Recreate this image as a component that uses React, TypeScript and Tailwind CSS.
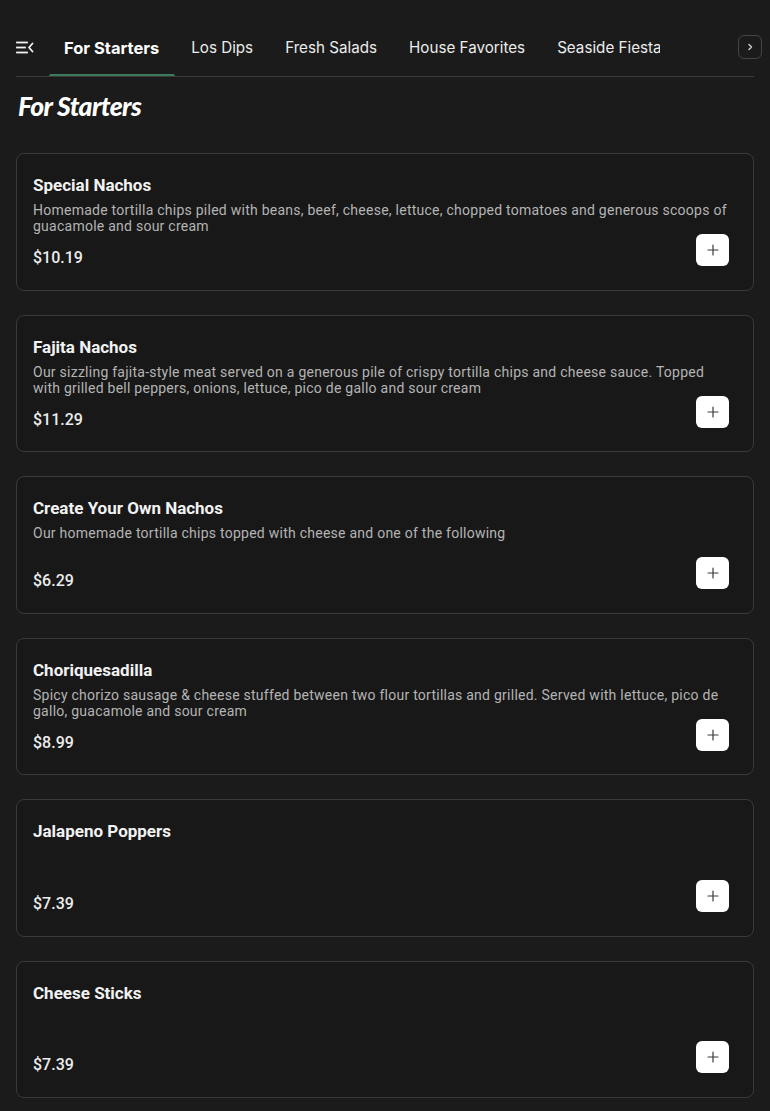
import React from "react";

const items = [
  {
    name: "Special Nachos",
    desc: "Homemade tortilla chips piled with beans, beef, cheese, lettuce, chopped tomatoes and generous scoops of guacamole and sour cream",
    price: "$10.19",
  },
  {
    name: "Fajita Nachos",
    desc: "Our sizzling fajita-style meat served on a generous pile of crispy tortilla chips and cheese sauce. Topped with grilled bell peppers, onions, lettuce, pico de gallo and sour cream",
    price: "$11.29",
  },
  {
    name: "Create Your Own Nachos",
    desc: "Our homemade tortilla chips topped with cheese and one of the following",
    price: "$6.29",
  },
  {
    name: "Choriquesadilla",
    desc: "Spicy chorizo sausage & cheese stuffed between two flour tortillas and grilled. Served with lettuce, pico de gallo, guacamole and sour cream",
    price: "$8.99",
  },
  { name: "Jalapeno Poppers", desc: "", price: "$7.39" },
  { name: "Cheese Sticks", desc: "", price: "$7.39" },
];

const tabs = ["For Starters", "Los Dips", "Fresh Salads", "House Favorites", "Seaside Fiesta"];

function MenuIcon() {
  return (
    <svg width="18" height="13" viewBox="0 0 18 13" fill="none" stroke="#f2f2f2" strokeWidth="1.8" strokeLinecap="square">
      <line x1="1" y1="1.5" x2="11" y2="1.5" />
      <line x1="1" y1="6.5" x2="9" y2="6.5" />
      <line x1="1" y1="11.5" x2="11" y2="11.5" />
      <polyline points="16.5,2.5 13,6.5 16.5,10.5" strokeLinecap="round" strokeLinejoin="round" />
    </svg>
  );
}

export default function App() {
  return (
    <div className="min-h-[1111px] bg-[#1b1b1b] px-4" style={{ fontFamily: "Roboto, sans-serif" }}>
      <div className="relative flex items-end border-b border-[#3c3c3c] h-[77px]">
        <div className="absolute left-0 top-[41px]">
          <MenuIcon />
        </div>
        <div className="ml-[32px] w-[612px] overflow-hidden flex" style={{ fontFamily: "Inter, sans-serif" }}>
          {tabs.map((t, i) => (
            <div key={t} className="relative shrink-0 px-4 pt-0 pb-[16px]">
              <span
                className={
                  i === 0
                    ? "block text-[16.5px] leading-[24px] font-bold text-white whitespace-nowrap -mt-[3px]"
                    : "block text-[15.2px] leading-[24px] text-[#ececec] whitespace-nowrap -mt-[3px]"
                }
              >
                {t}
              </span>
              {i === 0 && (
                <div className="absolute left-[1px] right-0 -bottom-[2px] h-[4px] rounded-full bg-[#3b7a5a]" />
              )}
            </div>
          ))}
        </div>
        <div className="absolute -right-[8px] top-[35px] w-[24px] h-[24px] rounded-md border border-[#454545] flex items-center justify-center">
          <svg width="10" height="10" viewBox="0 0 10 10" fill="none" stroke="#d0d0d0" strokeWidth="1.4" strokeLinecap="round" strokeLinejoin="round">
            <polyline points="4,2.5 6.5,5 4,7.5" />
          </svg>
        </div>
      </div>

      <h1
        className="mt-[9px] ml-[2px] text-[26.5px] leading-[40px] text-white italic font-black tracking-[-0.6px]"
        style={{ fontFamily: "Lato, sans-serif" }}
      >
        For Starters
      </h1>

      <div className="mt-[27px] flex flex-col gap-[24px]">
        {items.map((it) => (
          <div
            key={it.name}
            className="h-[137.5px] rounded-lg border border-[#3a3a3a] bg-[#181818] pl-4 pr-6 pt-[20px] pb-6 flex flex-col"
          >
            <div className="text-[17px] leading-[22px] font-bold text-[#f2f2f2]">{it.name}</div>
            {it.desc && (
              <div className="mt-[6px] text-[14px] leading-[16px] text-[#b4b4b4] tracking-[0.25px]">{it.desc}</div>
            )}
            <div className="mt-auto flex items-end justify-between">
              <div className="text-[16px] leading-[18px] font-medium text-[#ececec] -mb-[1px]">{it.price}</div>
              <button className="w-[33px] h-[32px] rounded-md bg-white flex items-center justify-center">
                <svg width="12" height="12" viewBox="0 0 12 12" stroke="#3a3a3a" strokeWidth="1.2" strokeLinecap="round">
                  <line x1="6" y1="1" x2="6" y2="11" />
                  <line x1="1" y1="6" x2="11" y2="6" />
                </svg>
              </button>
            </div>
          </div>
        ))}
      </div>
    </div>
  );
}
